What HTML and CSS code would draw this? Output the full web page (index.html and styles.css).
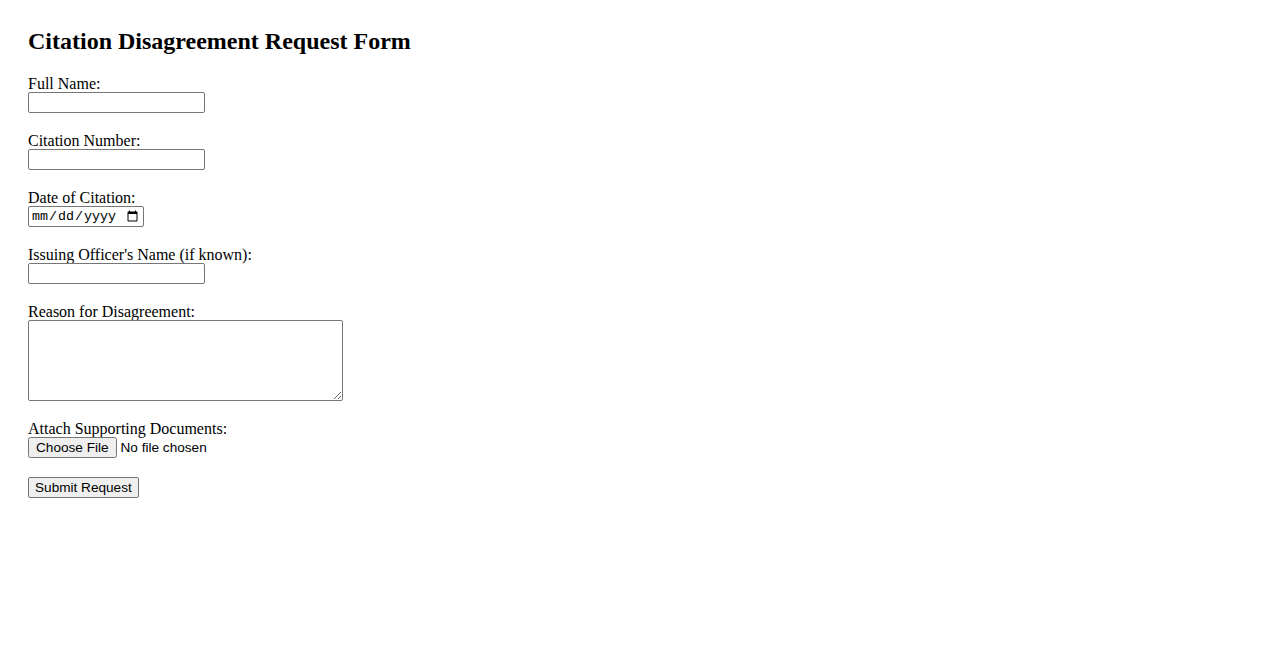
FILE: index.html
```html
<!DOCTYPE html>
<html lang="en">
<head>
<meta charset="utf-8">
<title>Citation Disagreement Request Form</title>
<link rel="stylesheet" href="styles.css">
</head>
<body>
<div class="page">
  <h2 class="title">Citation Disagreement Request Form</h2>
  <form class="form">
    <div class="field">
      <label class="label" for="name">Full Name:</label>
      <input class="text" type="text" id="name">
    </div>
    <div class="field">
      <label class="label" for="cit">Citation Number:</label>
      <input class="text" type="text" id="cit">
    </div>
    <div class="field">
      <label class="label" for="date">Date of Citation:</label>
      <input class="date" type="date" id="date">
    </div>
    <div class="field">
      <label class="label" for="officer">Issuing Officer's Name (if known):</label>
      <input class="text" type="text" id="officer">
    </div>
    <div class="field">
      <label class="label" for="reason">Reason for Disagreement:</label>
      <textarea class="area" id="reason"></textarea>
    </div>
    <div class="field">
      <label class="label" for="docs">Attach Supporting Documents:</label>
      <input class="file" type="file" id="docs">
    </div>
    <div class="field">
      <button class="submit" type="submit">Submit Request</button>
    </div>
  </form>
</div>
</body>
</html>
```
FILE: styles.css
```css
body {
  margin: 8px;
  font-family: "Liberation Serif", "Times New Roman", serif;
  font-size: 16px;
  color: #000;
  background: #fff;
}
.page {
  padding: 20px;
}
.title {
  margin: 0 0 20px 0;
  font-size: 24px;
  font-weight: bold;
}
.form {
  display: flex;
  flex-direction: column;
  align-items: flex-start;
}
.field {
  display: flex;
  flex-direction: column;
  align-items: flex-start;
  margin-bottom: 19px;
}
.label {
  display: block;
  line-height: 17px;
}
.text {
  width: 177px;
  height: 21px;
  box-sizing: border-box;
  font-family: "Liberation Sans", Arial, sans-serif;
  font-size: 13.33px;
  border: 1px solid #767676;
  border-radius: 2px;
  padding: 1px 2px;
  margin: 0;
}
.date {
  width: 116px;
  height: 21px;
  box-sizing: border-box;
  font-family: "Liberation Mono", monospace;
  font-size: 13.33px;
  border: 1px solid #767676;
  border-radius: 2px;
  padding: 1px 2px;
  margin: 0;
}
.area {
  width: 315px;
  height: 81px;
  box-sizing: border-box;
  font-family: "Liberation Mono", monospace;
  font-size: 13.33px;
  border: 1px solid #767676;
  border-radius: 2px;
  margin: 0;
}
.file {
  font-family: "Liberation Sans", Arial, sans-serif;
  font-size: 13.6px;
  margin: 0;
  height: 21px;
}
.submit {
  font-family: "Liberation Sans", Arial, sans-serif;
  font-size: 13.6px;
  margin: 0;
  height: 21px;
  padding: 1px 6px;
  background: #efefef;
  border: 1px solid #767676;
  border-radius: 2px;
  color: #000;
}
```
